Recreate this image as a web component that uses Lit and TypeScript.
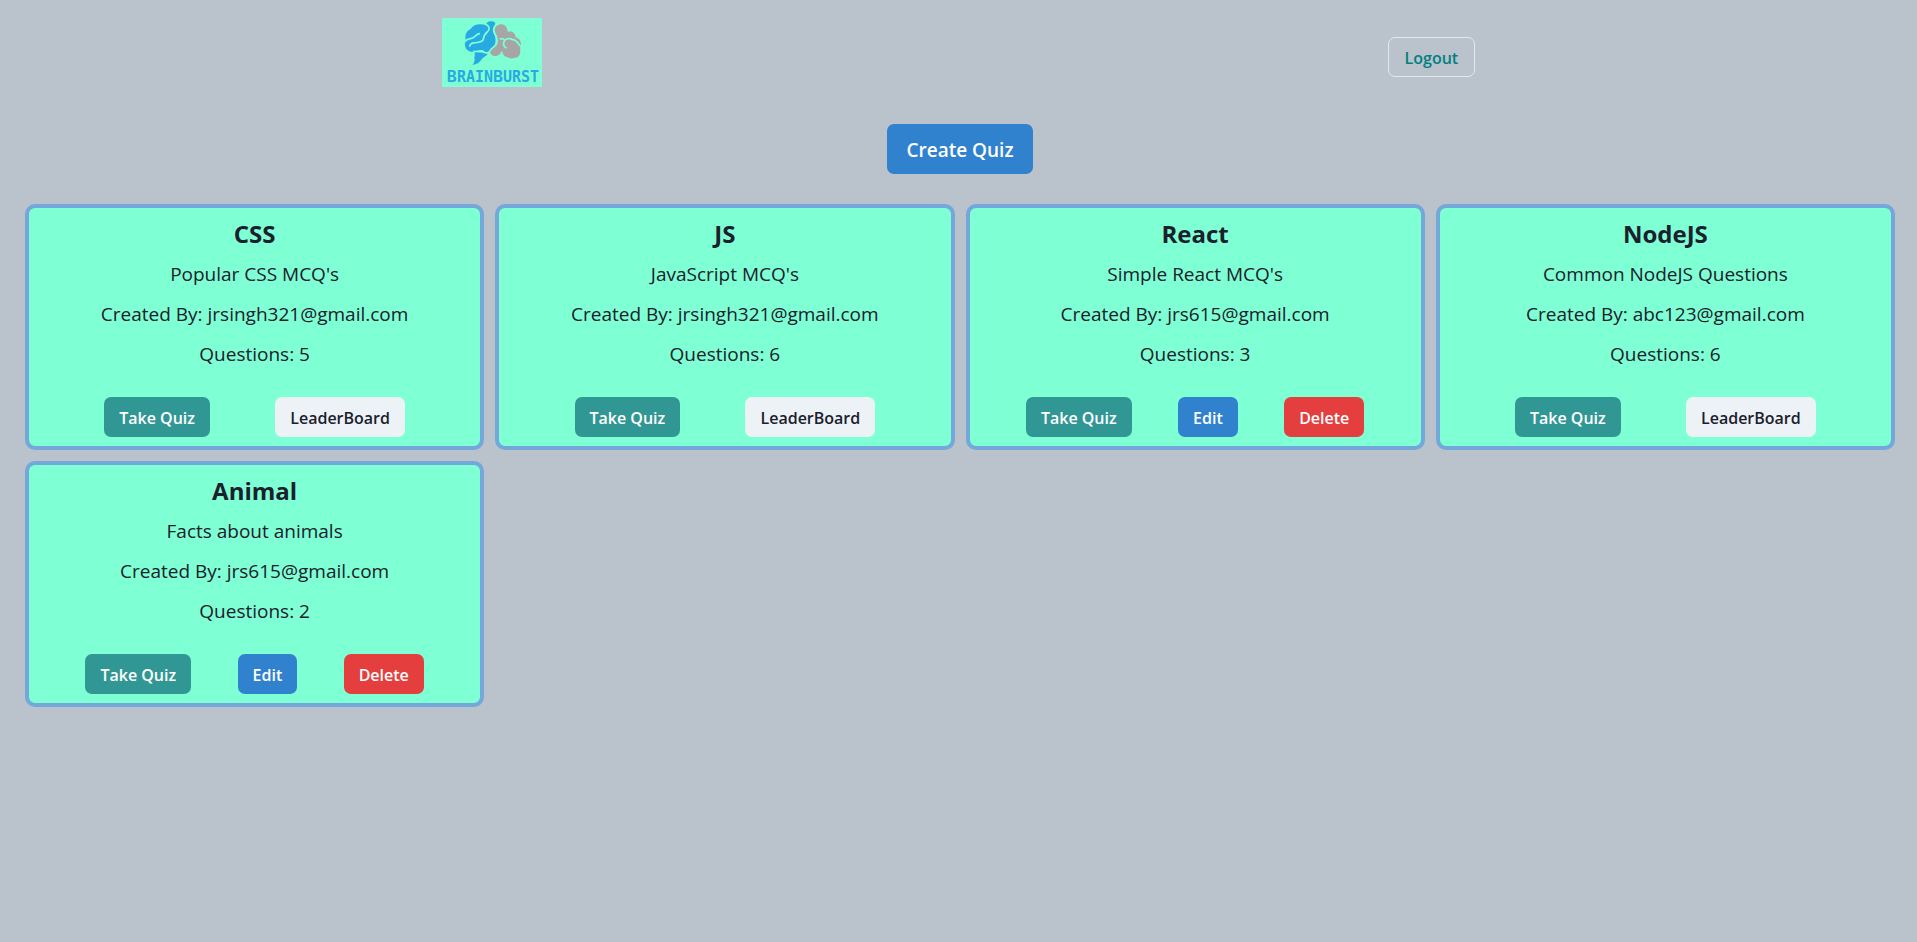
import { LitElement, html, css, svg } from "lit";
import { customElement, property } from "lit/decorators.js";

interface Quiz {
  title: string;
  description: string;
  author: string;
  questions: number;
  own: boolean;
}

const QUIZZES: Quiz[] = [
  { title: "CSS", description: "Popular CSS MCQ's", author: "jrsingh321@gmail.com", questions: 5, own: false },
  { title: "JS", description: "JavaScript MCQ's", author: "jrsingh321@gmail.com", questions: 6, own: false },
  { title: "React", description: "Simple React MCQ's", author: "jrs615@gmail.com", questions: 3, own: true },
  { title: "NodeJS", description: "Common NodeJS Questions", author: "abc123@gmail.com", questions: 6, own: false },
  { title: "Animal", description: "Facts about animals", author: "jrs615@gmail.com", questions: 2, own: true },
];

const buttonStyles = css`
  * {
    box-sizing: border-box;
  }
  .btn {
    height: 40px;
    padding: 2px 15px 0;
    border: 0;
    border-radius: 7px;
    font-family: inherit;
    font-size: 16px;
    font-weight: 600;
    line-height: 20px;
    color: #fff;
    white-space: nowrap;
    cursor: pointer;
  }
  .teal {
    background: #319795;
  }
  .blue {
    background: #3182ce;
  }
  .red {
    background: #e53e3e;
  }
  .gray {
    background: #edf2f7;
    color: #1a202c;
  }
`;

@customElement("quiz-card")
export class QuizCard extends LitElement {
  @property({ attribute: false }) quiz!: Quiz;

  static styles = [
    buttonStyles,
    css`
      :host {
        display: block;
      }
      .card {
        padding: 10px 10px 9px;
        border: 4px solid #74a8da;
        border-radius: 10px;
        background: #7fffd4;
        color: #1a202c;
        text-align: center;
      }
      .title {
        margin: 0;
        font-size: 24px;
        font-weight: 700;
        line-height: 31px;
      }
      .line {
        margin: 10px 0 0;
        font-size: 19px;
        font-weight: 400;
        line-height: 30px;
      }
      .actions {
        display: flex;
        justify-content: space-evenly;
        margin-top: 28px;
      }
    `,
  ];

  render() {
    const q = this.quiz;
    return html`
      <article class="card">
        <h2 class="title">${q.title}</h2>
        <p class="line">${q.description}</p>
        <p class="line">Created By: ${q.author}</p>
        <p class="line">Questions: ${q.questions}</p>
        <div class="actions">
          <button class="btn teal" type="button">Take Quiz</button>
          ${q.own
            ? html`<button class="btn blue" type="button">Edit</button>
                <button class="btn red" type="button">Delete</button>`
            : html`<button class="btn gray" type="button">LeaderBoard</button>`}
        </div>
      </article>
    `;
  }
}

const brain = svg`
  <g transform="translate(-36 -24)">
    <g fill="#27aae1">
      <path d="M107 90 C104 74 110 63 121 58 C128 45 146 39 168 45 C170 35 178 33 184 34 C192 34 197 38 196 42 C190 52 187 60 191 70 C197 80 199 92 195 103 C190 112 184 115 179 122 C172 129 163 127 157 120 C148 121 140 126 128 126 C114 125 106 117 105 106 C104 99 104 95 107 90 Z"/>
      <path d="M133 127 C146 128 156 126 163 130 C168 132 172 130 174 130 C170 139 160 141 155 148 C149 158 140 164 127 165 C134 157 135 149 133 142 C135 137 135 133 133 127 Z"/>
    </g>
    <path fill="#a6a6a6" d="M196 68 C191 58 196 46 206 44 C217 40 229 46 231 56 C233 62 232 65 236 65 C247 62 257 70 257 82 C267 84 274 94 273 106 C270 112 270 116 271 122 C271 134 265 144 254 143 C246 147 238 145 233 142 C223 140 217 132 217 122 C213 123 214 128 209 133 C201 141 184 140 181 129 C178 119 186 113 194 110 C202 105 205 98 203 86 C202 79 199 74 196 68 Z"/>
    <g fill="none" stroke="#7fffd4" stroke-width="5" stroke-linecap="round">
      <path d="M167 43 C178 46 181 58 172 66 C163 73 161 78 160 88 C157 96 148 97 138 98 C127 98 121 101 119 108"/>
      <path d="M103 97 C108 87 116 87 124 85 C134 84 137 73 148 71"/>
      <path d="M199 42 C190 52 189 62 194 71 C200 82 202 94 198 104 C193 111 185 113 180 122"/>
      <path stroke-width="4" d="M130 124 C142 126 150 121 157 122 C164 129 172 130 178 125"/>
      <path d="M273 109 C265 107 264 91 249 89 C238 84 225 84 221 98 C220 106 222 111 228 113"/>
      <path d="M224 91 C220 86 215 85 211 87"/>
    </g>
  </g>
`;

@customElement("app-root")
export class AppRoot extends LitElement {
  static styles = [
    buttonStyles,
    css`
      :host {
        display: block;
        min-height: 100vh;
        background: #bac2cc;
        font-family: "Segoe UI", "Open Sans", "Noto Sans", sans-serif;
        color: #1a202c;
      }
      .header {
        display: flex;
        justify-content: space-around;
        align-items: center;
        padding: 18px 19px 0;
      }
      .home {
        display: block;
        padding-bottom: 9px;
      }
      .logo {
        display: block;
        width: 100px;
        height: 69px;
        background: #7fffd4;
      }
      .wordmark {
        font-family: "DejaVu Sans Mono", monospace;
        font-size: 45px;
        font-weight: 700;
        fill: #27aae1;
      }
      .initial {
        font-size: 50px;
      }
      .outline {
        padding: 1px 16px 0;
        border: 1px solid #e2e8f0;
        background: transparent;
        color: #008080;
      }
      .main {
        display: flex;
        flex-direction: column;
        gap: 30px;
        padding: 28px 22px 28px 25px;
      }
      .large {
        align-self: center;
        height: 50px;
        padding: 2px 19px 0;
        font-size: 19px;
      }
      .grid {
        display: grid;
        grid-template-columns: repeat(auto-fill, minmax(380px, 1fr));
        gap: 11px;
      }
    `,
  ];

  render() {
    return html`
      <header class="header">
        <a class="home" href="#" aria-label="BrainBurst home">
          <svg class="logo" viewBox="0 0 300 207">
            ${brain}
            <text class="wordmark" x="153" y="192" text-anchor="middle"><tspan class="initial">B</tspan>RAIN<tspan class="initial">B</tspan>URST</text>
          </svg>
        </a>
        <button class="btn outline" type="button">Logout</button>
      </header>
      <main class="main">
        <button class="btn blue large" type="button">Create Quiz</button>
        <section class="grid">
          ${QUIZZES.map((q) => html`<quiz-card .quiz=${q}></quiz-card>`)}
        </section>
      </main>
    `;
  }
}
